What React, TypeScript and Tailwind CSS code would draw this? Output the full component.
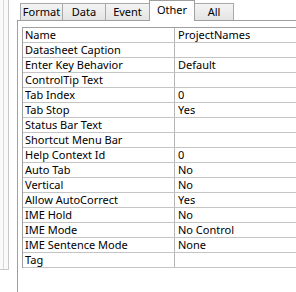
const tabs = [
  { label: 'Format', w: 'w-[43px]' },
  { label: 'Data', w: 'w-[44px]' },
  { label: 'Event', w: 'w-[45px]' },
  { label: 'Other', w: 'w-[46px]', active: true },
  { label: 'All', w: 'w-[40px]' }
]

const rows: [string, string][] = [
  ['Name', 'ProjectNames'],
  ['Datasheet Caption', ''],
  ['Enter Key Behavior', 'Default'],
  ['ControlTip Text', ''],
  ['Tab Index', '0'],
  ['Tab Stop', 'Yes'],
  ['Status Bar Text', ''],
  ['Shortcut Menu Bar', ''],
  ['Help Context Id', '0'],
  ['Auto Tab', 'No'],
  ['Vertical', 'No'],
  ['Allow AutoCorrect', 'Yes'],
  ['IME Hold', 'No'],
  ['IME Mode', 'No Control'],
  ['IME Sentence Mode', 'None'],
  ['Tag', '']
]

function Tab({ label, w, active }: { label: string; w: string; active?: boolean }) {
  if (active) {
    return (
      <div
        className={`${w} h-[21px] -mb-px -ml-px relative z-10 flex items-start justify-center pt-[1px] border border-b-0 border-[#a0a0a0] bg-white`}
      >
        {label}
      </div>
    )
  }
  return (
    <div
      className={`${w} h-[17px] -ml-px first:ml-0 flex items-center justify-center border border-b-0 border-[#a8a8a8] bg-gradient-to-b from-[#f4f4f4] to-[#e4e4e4]`}
    >
      {label}
    </div>
  )
}

export default function App() {
  return (
    <div
      className="w-[296px] h-[292px] bg-white flex overflow-hidden text-[11px] text-black"
      style={{ fontFamily: '"Noto Sans", "Open Sans", sans-serif' }}
    >
      {/* left edge of the neighbouring pane */}
      <div className="w-[17px] shrink-0">
        <div className="w-[9px] h-[270px] border-r border-b border-[#c8c8c8] bg-[#fafafa]">
          <div className="w-[4px] h-full border-r border-[#d8d8d8]" />
        </div>
      </div>

      <div className="flex-1 flex flex-col min-w-0">
        <div className="h-[20px] shrink-0 flex items-end pl-[3px]">
          {tabs.map((t) => (
            <Tab key={t.label} {...t} />
          ))}
        </div>

        <div className="flex-1 border-l border-t border-[#a0a0a0] pl-[4px] pt-[6px]">
          <div className="w-[300px] border-l border-t border-[#a0a0a0]">
            {rows.map(([k, v]) => (
              <div key={k} className="h-[15px] flex border-b border-[#c4c4c4] leading-[14px]">
                <div className="w-[152px] shrink-0 pl-[2px] border-r border-[#b4b4b4] whitespace-nowrap">
                  {k}
                </div>
                <div className="flex-1 pl-[3px] whitespace-nowrap">{v}</div>
              </div>
            ))}
          </div>
        </div>
      </div>
    </div>
  )
}
